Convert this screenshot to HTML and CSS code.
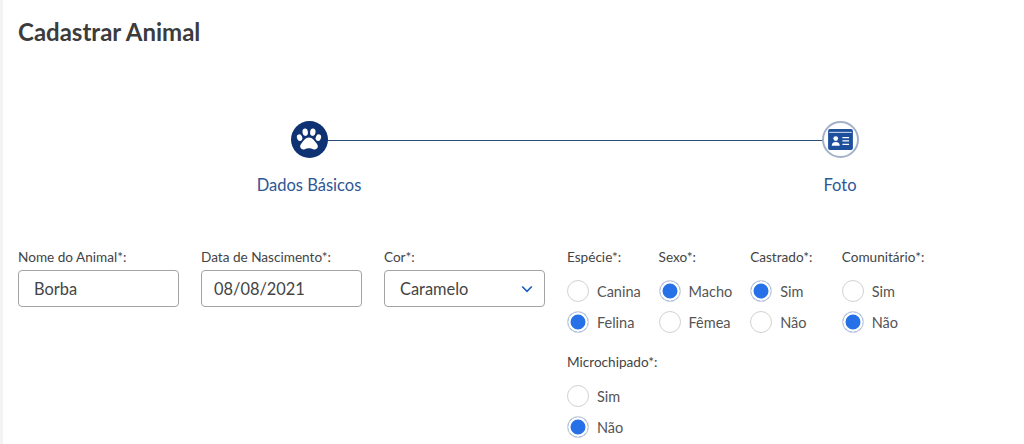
FILE: index.html
```html
<!DOCTYPE html>
<html lang="pt">
<head>
<meta charset="utf-8">
<title>Cadastrar Animal</title>
<link rel="stylesheet" href="styles.css">
</head>
<body>
<main class="page">
  <h1 class="title">Cadastrar Animal</h1>
  <div class="stepper">
    <span class="stepper-line"></span>
    <div class="step step-first">
      <span class="step-icon step-icon-active">
        <svg width="26" height="24" viewBox="0 0 26 24" fill="#fff"><ellipse cx="3.6" cy="9.6" rx="2.6" ry="3.4" transform="rotate(-20 3.6 9.6)"/><ellipse cx="9.2" cy="4.2" rx="2.7" ry="3.7" transform="rotate(-8 9.2 4.2)"/><ellipse cx="16.8" cy="4.2" rx="2.7" ry="3.7" transform="rotate(8 16.8 4.2)"/><ellipse cx="22.4" cy="9.6" rx="2.6" ry="3.4" transform="rotate(20 22.4 9.6)"/><path d="M13 9.6c3.2 0 5.2 3 7 5.2 1.6 2 2.2 3.2 1.6 4.8-.6 1.6-2.4 2.2-4.4 1.6-1.6-.4-2.8-.9-4.2-.9s-2.6.5-4.2.9c-2 .6-3.8 0-4.4-1.6-.6-1.6 0-2.8 1.6-4.8 1.8-2.2 3.8-5.2 7-5.2z"/></svg>
      </span>
      <span class="step-label">Dados Básicos</span>
    </div>
    <div class="step step-last">
      <span class="step-icon step-icon-next">
        <svg width="25" height="21" viewBox="0 0 26 22"><rect x="0" y="0" width="26" height="22" rx="2" fill="#1d4f9c"/><rect x="1.2" y="3" width="23.6" height="1" fill="#dfe7f3"/><circle cx="8" cy="10" r="2.5" fill="#fff"/><path d="M3.8 17.5c0-3 1.9-4 4.200-4s4.200 1 4.200 4z" fill="#fff"/><path d="M15 9h7M15 12.500h7M15 16h7" stroke="#fff" stroke-width="1.300"/></svg>
      </span>
      <span class="step-label">Foto</span>
    </div>
  </div>

  <form class="form">
    <div class="field">
      <label class="label">Nome do Animal*:</label>
      <div class="control">Borba</div>
    </div>
    <div class="field">
      <label class="label">Data de Nascimento*:</label>
      <div class="control control-date">08/08/2021</div>
    </div>
    <div class="field">
      <label class="label">Cor*:</label>
      <div class="control control-select">Caramelo
        <svg width="12" height="8" viewBox="0 0 12 8" fill="none"><path d="M1.2 1.5 6 6.300l4.800-4.800" stroke="#1d5fbf" stroke-width="1.700"/></svg>
      </div>
    </div>
    <div class="radios">
      <fieldset class="group">
        <legend class="label">Espécie*:</legend>
        <div class="radio"><span class="dot"></span>Canina</div>
        <div class="radio"><span class="dot dot-on"></span>Felina</div>
      </fieldset>
      <fieldset class="group">
        <legend class="label">Sexo*:</legend>
        <div class="radio"><span class="dot dot-on"></span>Macho</div>
        <div class="radio"><span class="dot"></span>Fêmea</div>
      </fieldset>
      <fieldset class="group">
        <legend class="label">Castrado*:</legend>
        <div class="radio"><span class="dot dot-on"></span>Sim</div>
        <div class="radio"><span class="dot"></span>Não</div>
      </fieldset>
      <fieldset class="group">
        <legend class="label">Comunitário*:</legend>
        <div class="radio"><span class="dot"></span>Sim</div>
        <div class="radio"><span class="dot dot-on"></span>Não</div>
      </fieldset>
      <fieldset class="group">
        <legend class="label">Microchipado*:</legend>
        <div class="radio"><span class="dot"></span>Sim</div>
        <div class="radio"><span class="dot dot-on"></span>Não</div>
      </fieldset>
    </div>
  </form>
</main>
</body>
</html>
```

FILE: styles.css
```css
* { box-sizing: border-box; }
html, body { margin: 0; height: 100%; overflow: hidden; background: #fff; }
body { font-family: "Lato", "Open Sans", sans-serif; color: #444; }
.page {
  height: 444px;
  border-left: 3px solid #f3f3f3;
  padding: 18px 15px 0;
}
.title {
  margin: 0;
  font-size: 24px;
  line-height: 27px;
  font-weight: 700;
  color: #3c3c3c;
}
.stepper {
  position: relative;
  display: flex;
  justify-content: space-between;
  margin: 76px 0 0 238px;
  width: 604px;
}
.stepper-line {
  position: absolute;
  left: 71px;
  right: 20px;
  top: 19px;
  height: 1px;
  background: #2a4f7c;
}
.step {
  position: relative;
  display: flex;
  flex-direction: column;
  align-items: center;
}
.step-first { width: 106px; }
.step-last { width: 40px; }
.step-icon {
  width: 37px;
  height: 37px;
  border-radius: 50%;
  display: flex;
  align-items: center;
  justify-content: center;
}
.step-icon-active { background: #0f3272; }
.step-icon-next { background: #fff; border: 2px solid #a3b1c9; }
.step-label {
  margin-top: 17px;
  font-size: 16.5px;
  line-height: 20px;
  color: #2d5796;
  white-space: nowrap;
}
.form {
  display: flex;
  align-items: flex-start;
  gap: 21.7px;
  margin-top: 54px;
}
.field { width: 161.3px; flex: none; }
.label {
  display: block;
  padding: 0;
  font-size: 13.6px;
  line-height: 16px;
  color: #444;
}
.control {
  display: flex;
  align-items: center;
  justify-content: space-between;
  height: 37px;
  margin-top: 5px;
  padding: 0 11px 0 15px;
  border: 1px solid #a3a3a3;
  border-radius: 4px;
  font-size: 16.4px;
  color: #444;
}
.control-date { padding-left: 12px; }
.radios {
  display: grid;
  grid-template-columns: repeat(4, 91.6px);
  row-gap: 16.5px;
}
.group { margin: 0; padding: 0; border: 0; min-width: 0; }
.group .label { margin-bottom: 10.5px; }
.radio {
  display: flex;
  align-items: center;
  gap: 8px;
  height: 31px;
  font-size: 14.5px;
  color: #555;
  white-space: nowrap;
}
.dot {
  width: 22px;
  height: 22px;
  flex: none;
  border-radius: 50%;
  border: 1px solid #d2d2d2;
  background: #fff;
}
.dot-on {
  background: #2670e8;
  border: 1px solid #d8d8d8;
  box-shadow: inset 0 0 0 2.5px #fff;
}
```
